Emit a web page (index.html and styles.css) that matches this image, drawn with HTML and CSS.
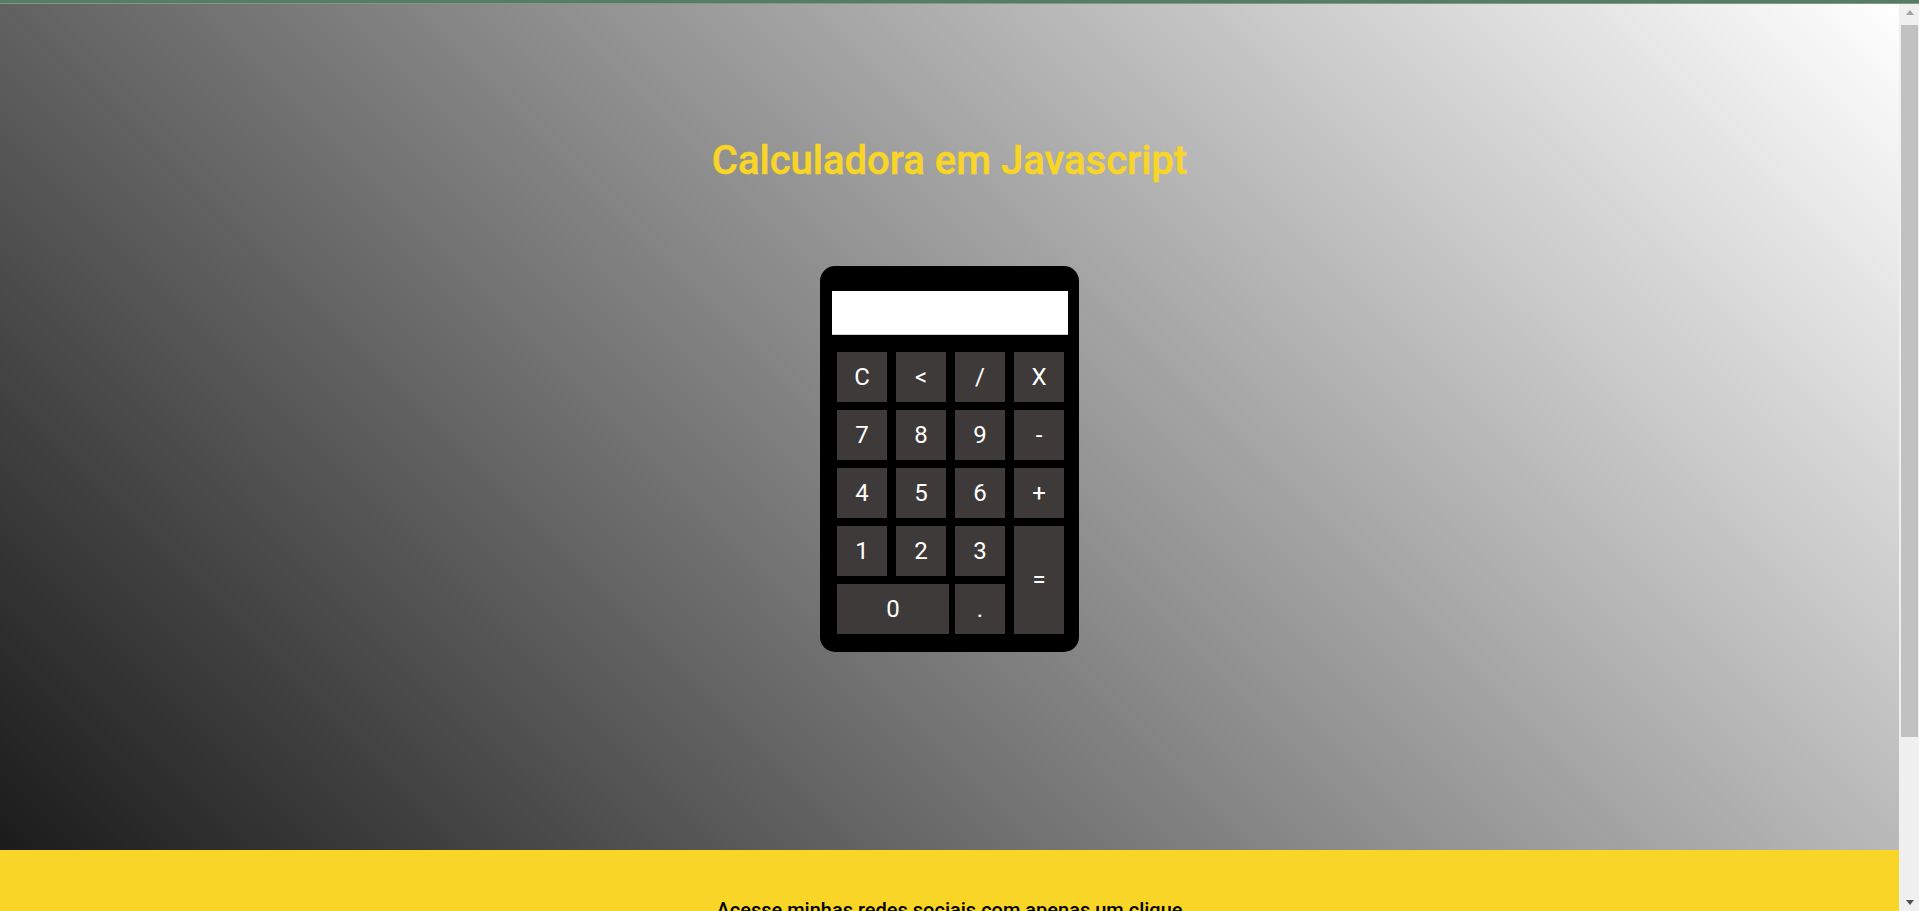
FILE: index.html
```html
<!DOCTYPE html>
<html lang="pt-BR">
<head>
<meta charset="utf-8">
<title>Calculadora em Javascript</title>
<link rel="stylesheet" href="styles.css">
</head>
<body>
<div class="topline"></div>
<div class="viewport">
  <div class="page">
    <main class="hero">
      <h1 class="title">Calculadora em Javascript</h1>
      <div class="calc">
        <div class="display"></div>
        <div class="keys">
          <button class="key">C</button>
          <button class="key">&lt;</button>
          <button class="key">/</button>
          <button class="key">X</button>
          <button class="key">7</button>
          <button class="key">8</button>
          <button class="key">9</button>
          <button class="key">-</button>
          <button class="key">4</button>
          <button class="key">5</button>
          <button class="key">6</button>
          <button class="key">+</button>
          <button class="key">1</button>
          <button class="key">2</button>
          <button class="key">3</button>
          <button class="key key-eq">=</button>
          <button class="key key-zero">0</button>
          <button class="key">.</button>
        </div>
      </div>
    </main>
    <footer class="footer">
      <p class="footer-text">Acesse minhas redes sociais com apenas um clique</p>
    </footer>
  </div>
  <div class="scrollbar">
    <div class="sb-arrow sb-up"></div>
    <div class="sb-track"><div class="sb-thumb"></div></div>
    <div class="sb-arrow sb-down"></div>
  </div>
</div>
</body>
</html>
```

FILE: styles.css
```css
* { box-sizing: border-box; }

html, body {
  margin: 0;
  height: 911px;
  overflow: hidden;
}

body {
  display: flex;
  flex-direction: column;
  font-family: Roboto, "Liberation Sans", sans-serif;
}

.topline {
  height: 4px;
  flex: 0 0 4px;
  background: #5b7a63;
  border-bottom: 1px solid #7d9c85;
}

.viewport {
  flex: 1;
  min-height: 0;
  display: flex;
}

.page {
  flex: 1;
  min-width: 0;
  overflow: hidden;
}

.hero {
  height: 846px;
  padding-top: 136px;
  background: linear-gradient(45deg, #1b1b1b 0%, #ffffff 100%);
}

.title {
  margin: 0 0 84px;
  text-align: center;
  font-size: 40px;
  font-weight: 500;
  line-height: 42px;
  color: #f8d527;
  -webkit-text-stroke: 0.5px #f8d527;
}

.calc {
  width: 259px;
  height: 386px;
  margin: 0 auto;
  padding: 25px 11px 18px 12px;
  background: #000;
  border-radius: 15px;
}

.display {
  height: 44px;
  background: #fff;
  border-bottom: 1px solid #d0d0d0;
}

.keys {
  display: grid;
  grid-template-columns: repeat(4, 50px);
  grid-auto-rows: 50px;
  column-gap: 9px;
  row-gap: 8px;
  margin: 17px 0 0 5px;
}

.key {
  margin: 0;
  padding: 0;
  border: none;
  background: #3e3a39;
  color: #fff;
  font-family: Roboto, "Liberation Sans", sans-serif;
  font-size: 24px;
  font-weight: 400;
  line-height: 1;
  display: flex;
  align-items: center;
  justify-content: center;
}

.key-eq {
  grid-column: 4;
  grid-row: 4 / span 2;
}

.key-zero {
  grid-column: 1 / span 2;
  width: 112px;
}

.footer {
  background: #f8d527;
  padding: 49px 0 160px;
}

.footer-text {
  margin: 0;
  text-align: center;
  font-size: 20px;
  font-weight: 500;
  line-height: 23px;
  color: #000;
}

.scrollbar {
  width: 20px;
  flex: 0 0 20px;
  background: #f0f0f0;
  display: flex;
  flex-direction: column;
  padding-left: 2px;
  padding-right: 1px;
}

.sb-arrow {
  height: 17px;
  flex: 0 0 17px;
  display: flex;
  align-items: center;
  justify-content: center;
}

.sb-up::before {
  content: "";
  border-left: 4.5px solid transparent;
  border-right: 4.5px solid transparent;
  border-bottom: 5px solid #a3a3a3;
}

.sb-down::before {
  content: "";
  border-left: 4.5px solid transparent;
  border-right: 4.5px solid transparent;
  border-top: 5px solid #505050;
}

.sb-track {
  flex: 1;
  padding-top: 4px;
}

.sb-thumb {
  height: 712px;
  background: #c1c1c1;
}
```
